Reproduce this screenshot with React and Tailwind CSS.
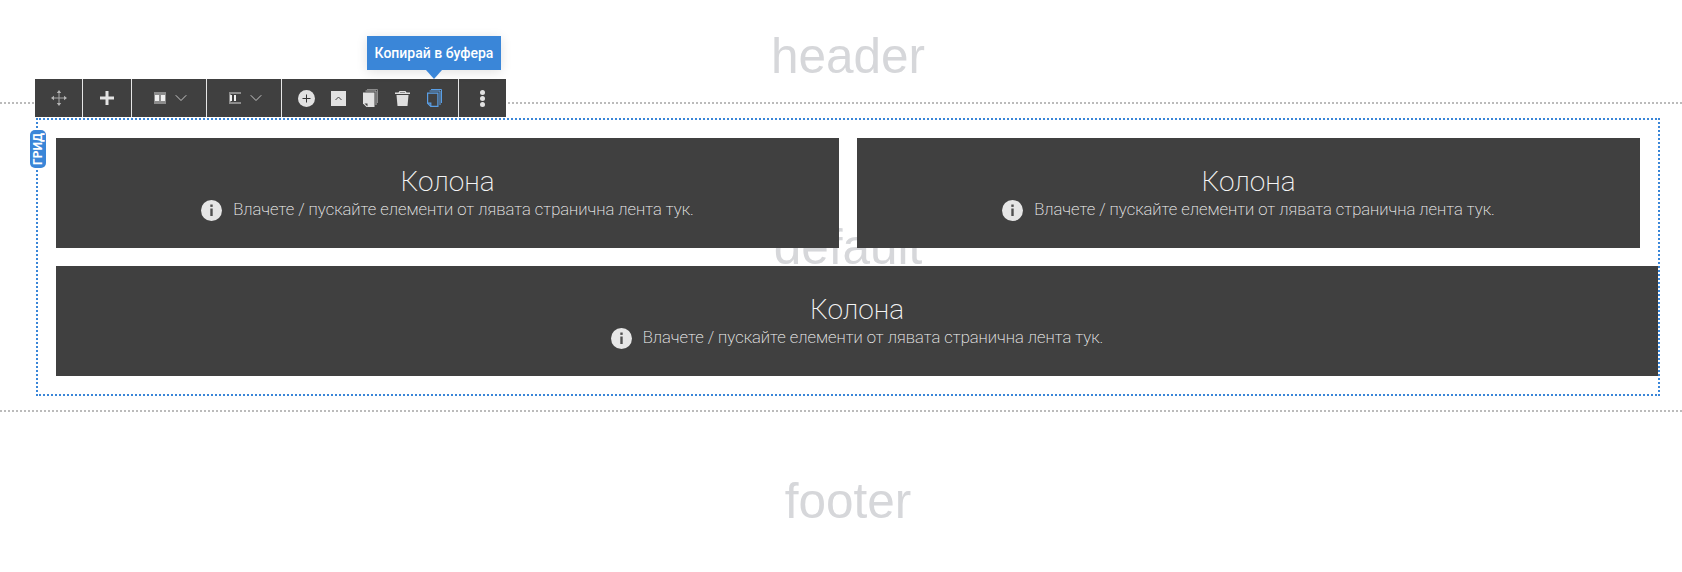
import { ChevronDown } from 'lucide-react';

function MoveIcon() {
  return (
    <svg width="16" height="16" viewBox="0 0 16 16" fill="none" stroke="#a8a8a8" strokeWidth="1">
      <path d="M8 1v14M1 8h14" />
      <path d="M8 0L5.800 3h4.400zM8 16l-2.200-3h4.400zM0 8l3-2.200v4.400zM16 8l-3-2.200v4.400z" fill="#b4b4b4" stroke="none" />
    </svg>
  );
}

function PlusIcon() {
  return (
    <svg width="14" height="14" viewBox="0 0 14 14" fill="#e4e4e4">
      <path d="M5.500 0h3v5.500H14v3H8.500V14h-3V8.500H0v-3h5.500z" />
    </svg>
  );
}

function ColumnsIcon() {
  return (
    <svg width="12" height="12" viewBox="0 0 12 12">
      <rect width="12" height="12" fill="#8c8c8c" />
      <rect x="1" y="3" width="4" height="6" fill="#f0f0f0" />
      <rect x="7" y="3" width="4" height="6" fill="#f0f0f0" />
    </svg>
  );
}

function AlignIcon() {
  return (
    <svg width="12" height="12" viewBox="0 0 12 12">
      <path d="M0 0h12v2H2v8h10v2H0z" fill="#8c8c8c" />
      <rect x="1" y="3" width="2" height="6" fill="#f0f0f0" />
      <rect x="5" y="3" width="2" height="6" fill="#f0f0f0" />
    </svg>
  );
}

function CirclePlusIcon() {
  return (
    <svg width="17" height="17" viewBox="0 0 17 17">
      <circle cx="8.500" cy="8.500" r="8.500" fill="#e2e2e2" />
      <path d="M8.500 4.500v8M4.500 8.500h8" stroke="#333" strokeWidth="1" />
    </svg>
  );
}

function CollapseIcon() {
  return (
    <svg width="15" height="15" viewBox="0 0 15 15">
      <rect width="15" height="15" fill="#e2e2e2" />
      <path d="M4.500 9l3-3 3 3" fill="none" stroke="#444" strokeWidth="1" />
    </svg>
  );
}

function PagesIcon() {
  return (
    <svg width="15" height="18" viewBox="0 0 15 18" fill="none">
      <path d="M4 .5h10.500V14" stroke="#8c8c8c" strokeWidth="1" />
      <path d="M2.500 2h10.500v14" stroke="#b0b0b0" strokeWidth="1" />
      <path d="M0 3.500h11.500V18H3.500L0 14.500z" fill="#e2e2e2" />
      <path d="M1.500 14.500h3v3z" fill="#404040" />
    </svg>
  );
}

function PagesActiveIcon() {
  return (
    <svg width="15" height="18" viewBox="0 0 15 18" fill="none" stroke="#5a9fe6">
      <path d="M4 .5h10.500V14" strokeWidth="1" />
      <path d="M2.500 2h10.500v14" strokeWidth="1" />
      <path d="M.600 4.100h10.300V17.400H3.800L.600 14.200z" strokeWidth="1.200" />
      <path d="M.600 14.200h3.200v3.200" strokeWidth="1.200" />
    </svg>
  );
}

function TrashIcon() {
  return (
    <svg width="15" height="15" viewBox="0 0 15 15" fill="#dedede">
      <path d="M4.500 0h6l1 1.500H15V3H0V1.500h3.500zM5 1v.5h5V1z" fillRule="evenodd" />
      <path d="M1.500 4h12l-1 11h-10z" />
    </svg>
  );
}

function InfoIcon() {
  return (
    <svg width="21" height="21" viewBox="0 0 21 21" className="shrink-0">
      <circle cx="10.500" cy="10.500" r="10.500" fill="#e6e6e6" />
      <rect x="9.300" y="4.500" width="2.400" height="2.400" fill="#505050" />
      <rect x="9.300" y="8.500" width="2.400" height="7.500" fill="#505050" />
    </svg>
  );
}

function Toolbar() {
  return (
    <div className="absolute left-[35px] top-[79px] flex h-[38px] bg-[#404040]">
      <div className="flex w-[48px] items-center justify-center border-r border-[#e6e6e6]">
        <MoveIcon />
      </div>
      <div className="flex w-[49px] items-center justify-center border-r border-[#e6e6e6]">
        <PlusIcon />
      </div>
      <div className="flex w-[75px] items-center justify-center gap-[5px] border-r border-[#e6e6e6] pl-[6px]">
        <ColumnsIcon />
        <ChevronDown size={20} strokeWidth={1} color="#e0e0e0" />
      </div>
      <div className="flex w-[75px] items-center justify-center gap-[5px] border-r border-[#e6e6e6] pl-[6px]">
        <AlignIcon />
        <ChevronDown size={20} strokeWidth={1} color="#e0e0e0" />
      </div>
      <div className="flex w-[177px] items-center border-r border-[#e6e6e6] pl-[8px]">
        <div className="flex w-[32px] justify-center"><CirclePlusIcon /></div>
        <div className="flex w-[32px] justify-center"><CollapseIcon /></div>
        <div className="flex w-[32px] justify-center"><PagesIcon /></div>
        <div className="flex w-[32px] justify-center"><TrashIcon /></div>
        <div className="flex w-[32px] justify-center"><PagesActiveIcon /></div>
      </div>
      <div className="flex w-[47px] flex-col items-center justify-center gap-[1px]">
        <span className="h-[5px] w-[5px] rounded-full bg-[#e2e2e2]" />
        <span className="h-[5px] w-[5px] rounded-full bg-[#e2e2e2]" />
        <span className="h-[5px] w-[5px] rounded-full bg-[#e2e2e2]" />
      </div>
    </div>
  );
}

function Tooltip() {
  return (
    <div className="absolute left-[367px] top-[36px] flex h-[34px] w-[134px] items-center justify-center bg-[#3a86d8] font-['Roboto',sans-serif] text-[14px] font-medium text-white shadow-[0_2px_12px_rgba(0,0,0,0.12)]">
      Копирай в буфера
      <span className="absolute left-[59px] top-full h-0 w-0 border-x-[8px] border-t-[9px] border-x-transparent border-t-[#3a86d8]" />
    </div>
  );
}

function Column({ className = '' }) {
  return (
    <div className={`flex h-[110px] flex-col items-center bg-[#404040] pt-[29px] font-['Roboto',sans-serif] font-[200] text-[#f5f5f5] ${className}`}>
      <div className="text-[28px] leading-[30px]">Колона</div>
      <div className="mt-[1px] flex h-[24px] items-center gap-[11px] text-[16.650px]">
        <InfoIcon />
        Влачете / пускайте елементи от лявата странична лента тук.
      </div>
    </div>
  );
}

export default function App() {
  return (
    <div className="relative h-[572px] w-full overflow-hidden bg-white pl-[14px] font-['Liberation_Sans',sans-serif] text-[49.500px] text-[#d6d7da]">
      <div className="flex h-[102px] items-center justify-center pt-[10px]">
        header
      </div>
      <div className="relative -ml-[14px] h-[310px] border-y-2 border-dotted border-[#bbbbbb] pl-[36px] pr-[22px] pt-[14px]">
        <div className="absolute inset-x-0 top-[106px] pl-[14px] text-center">default</div>
        <div className="relative grid grid-cols-[783px_783px_0px] gap-[18px] border-2 border-dotted border-[#3a86d8] pb-[18px] pl-[18px] pt-[18px]">
          <Column />
          <Column />
          <div />
          <Column className="col-span-3" />
          <div className="absolute left-[-8px] top-[10px] flex h-[38px] w-[16px] items-center justify-center rounded-[5px] bg-[#3a86d8]">
            <span className="-rotate-90 whitespace-nowrap font-['Roboto',sans-serif] text-[12px] font-bold leading-none text-white">ГРИД</span>
          </div>
        </div>
      </div>
      <div className="flex h-[160px] items-start justify-center pt-[52px]">footer</div>
      <Toolbar />
      <Tooltip />
    </div>
  );
}
